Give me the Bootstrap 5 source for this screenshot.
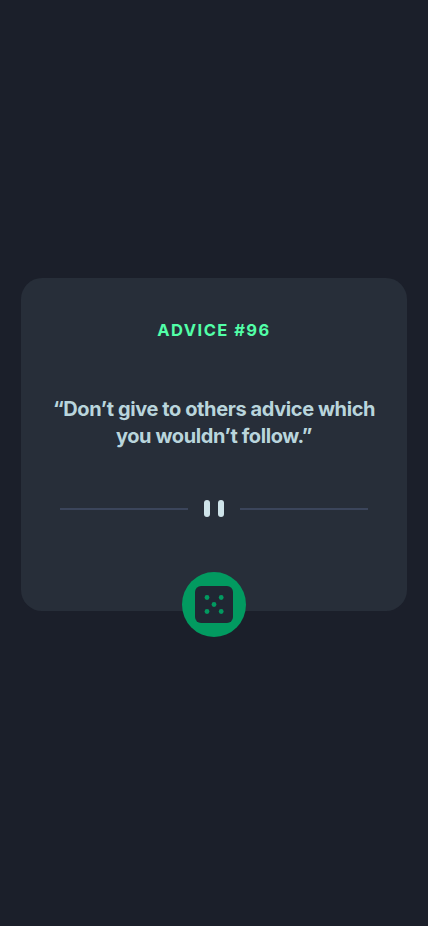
<!DOCTYPE html>
<html lang="en">
<head>
<meta charset="utf-8">
<meta name="viewport" content="width=device-width, initial-scale=1">
<title>Advice generator</title>
<link href="https://cdn.jsdelivr.net/npm/bootstrap@5.3.0/dist/css/bootstrap.min.css" rel="stylesheet">
<style>
body{background:#1b1f2a;font-family:Inter,"Open Sans",sans-serif}
.advice-card{width:90%;height:333px;margin-top:-37px;background:#272e39;border-radius:21px;padding-top:42px}
.advice-id{color:#52ffa8;font-size:16.5px;line-height:20px;font-weight:700;letter-spacing:1.46px}
.advice-text{color:#b9d5dc;font-size:20px;line-height:27px;font-weight:700;letter-spacing:-.4px;margin-top:55.5px;white-space:nowrap}
.divider{width:308px;margin-top:50px}
.divider svg{display:block}
.dice-btn{width:64px;height:65px;top:294px;left:50%;transform:translateX(-50%);background:#029a60;border-radius:50%}
</style>
<script src="https://cdn.jsdelivr.net/npm/bootstrap@5.3.0/dist/js/bootstrap.bundle.min.js"></script>
</head>
<body>
<main class="min-vh-100 d-flex align-items-center justify-content-center">
<section class="advice-card position-relative d-flex flex-column align-items-center text-center">
<h1 class="advice-id mb-0">ADVICE #96</h1>
<p class="advice-text mb-0">“Don’t give to others advice which<br>you wouldn’t follow.”</p>
<div class="divider">
<svg width="308" height="17" viewBox="0 0 308 17"><path fill="#3b455b" d="M0 8h128v2H0zM180 8h128v2H180z"/><g fill="#cee3e9"><rect x="144" width="6" height="17" rx="3"/><rect x="158" width="6" height="17" rx="3"/></g></svg>
</div>
<button class="dice-btn position-absolute border-0 p-0 d-flex align-items-center justify-content-center" aria-label="New advice">
<svg width="38" height="37" viewBox="0 0 38 37"><rect width="38" height="37" rx="6" fill="#202733"/><g fill="#029a60"><circle cx="12" cy="11.5" r="2.4"/><circle cx="26.200" cy="11.500" r="2.4"/><circle cx="19" cy="18.500" r="2.4"/><circle cx="12" cy="25.500" r="2.4"/><circle cx="26.200" cy="25.500" r="2.4"/></g></svg>
</button>
</section>
</main>
</body>
</html>
